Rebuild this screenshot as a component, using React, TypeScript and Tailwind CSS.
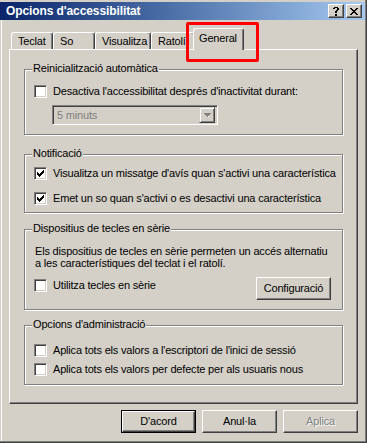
import React from "react";

const FONT = { fontFamily: '"Liberation Sans", Arial, sans-serif' };

function CheckMark() {
  const px: [number, number][] = [
    [6, 0], [5, 1], [6, 1], [0, 2], [4, 2], [5, 2], [6, 2],
    [0, 3], [1, 3], [3, 3], [4, 3], [5, 3],
    [0, 4], [1, 4], [2, 4], [3, 4], [4, 4],
    [1, 5], [2, 5], [3, 5], [2, 6],
  ];
  return (
    <svg width="7" height="7" viewBox="0 0 7 7" shapeRendering="crispEdges" className="block">
      {px.map(([x, y], i) => (
        <rect key={i} x={x} y={y} width="1" height="1" fill="#000" />
      ))}
    </svg>
  );
}

function Check({ checked, label }: { checked?: boolean; label: string }) {
  return (
    <div className="flex h-[13px] items-center">
      <div className="box-border flex h-[13px] w-[13px] shrink-0 items-center justify-center border border-t-[#808080] border-l-[#808080] border-r-white border-b-white bg-white shadow-[inset_1px_1px_0_#404040,inset_-1px_-1px_0_#d4d0c8]">
        {checked && <CheckMark />}
      </div>
      <span className="ml-[6px] whitespace-nowrap text-[11px] leading-[13px] tracking-[-0.18px] text-black">{label}</span>
    </div>
  );
}

function Group({ label, className, children }: { label: string; className: string; children?: React.ReactNode }) {
  return (
    <div
      className={`relative box-border w-[319px] border border-[#808080] shadow-[inset_1px_1px_0_#fff,1px_1px_0_#fff] ${className}`}
    >
      <span className="absolute left-[7px] top-[-8px] bg-[#d4d0c8] px-[1px] text-[11px] leading-[13px] tracking-[-0.18px] text-black whitespace-nowrap">
        {label}
      </span>
      {children}
    </div>
  );
}

function Button({ label, def, disabled, className = "" }: { label: string; def?: boolean; disabled?: boolean; className?: string }) {
  const inner = (
    <div className="box-border flex h-full w-full items-center justify-center border border-t-white border-l-white border-r-[#404040] border-b-[#404040] shadow-[inset_-1px_-1px_0_#808080]">
      <span
        className={`text-[11px] leading-[13px] tracking-[-0.18px] ${disabled ? "text-[#808080] [text-shadow:1px_1px_0_#fff]" : "text-black"}`}
      >
        {label}
      </span>
    </div>
  );
  return (
    <div className={`box-border h-[23px] w-[75px] shrink-0 ${def ? "border border-black" : ""} ${className}`}>{inner}</div>
  );
}

function Tab({ label, w, selected }: { label: string; w: string; selected?: boolean }) {
  if (selected) {
    return (
      <div
        className={`relative z-10 -mb-[1px] -ml-[2px] box-border h-[22px] ${w} whitespace-nowrap rounded-t-[3px] border-l border-t border-r border-l-white border-t-white border-r-[#404040] bg-[#d4d0c8] pl-[5px] pt-[3px] text-[11px] leading-[13px] tracking-[-0.18px] text-black shadow-[inset_-1px_0_0_#808080]`}
      >
        {label}
      </div>
    );
  }
  return (
    <div
      className={`box-border h-[17px] ${w} overflow-hidden whitespace-nowrap rounded-t-[3px] border-l border-t border-r border-l-white border-t-white border-r-[#404040] pl-[6px] pt-[2px] text-[11px] leading-[13px] tracking-[-0.18px] text-black shadow-[inset_-1px_0_0_#808080]`}
    >
      {label}
    </div>
  );
}

function XGlyph() {
  const rows = ["XX....XX", ".XX..XX.", "..XXXX..", "...XX...", "..XXXX..", ".XX..XX.", "XX....XX"];
  return (
    <svg width="8" height="7" viewBox="0 0 8 7" shapeRendering="crispEdges" className="block">
      {rows.flatMap((r, y) =>
        r.split("").map((c, x) => (c === "X" ? <rect key={`${x}-${y}`} x={x} y={y} width="1" height="1" fill="#000" /> : null))
      )}
    </svg>
  );
}

function QGlyph() {
  const rows = [".XXXX.", "XX..XX", "....XX", "...XX.", "..XX..", "..XX..", "......", "..XX..", "..XX.."];
  return (
    <svg width="6" height="9" viewBox="0 0 6 9" shapeRendering="crispEdges" className="block">
      {rows.flatMap((r, y) =>
        r.split("").map((c, x) => (c === "X" ? <rect key={`${x}-${y}`} x={x} y={y} width="1" height="1" fill="#000" /> : null))
      )}
    </svg>
  );
}

function TitleBtn({ children }: { children: React.ReactNode }) {
  return (
    <div className="box-border flex h-[14px] w-[16px] items-center justify-center border border-t-white border-l-white border-r-[#404040] border-b-[#404040] bg-[#d4d0c8] shadow-[inset_-1px_-1px_0_#808080]">
      {children}
    </div>
  );
}

export default function App() {
  return (
    <div
      style={FONT}
      className="relative box-border flex h-[443px] w-[367px] flex-col overflow-hidden border-r border-b border-[#404040] bg-[#d4d0c8] pt-[2px] text-[11px] leading-[13px] shadow-[inset_-1px_-1px_0_#808080]"
    >
      {/* left frame highlight */}
      <div className="absolute bottom-[1px] left-[1px] top-[20px] w-[1px] bg-white" />

      {/* title bar */}
      <div className="mr-[1px] flex h-[18px] shrink-0 items-center bg-gradient-to-r from-[#0a246a] to-[#a6caf0] pl-[6px] pr-[3px]">
        <span className="text-[12px] font-bold leading-[14px] tracking-[-0.1px] text-white">Opcions d'accessibilitat</span>
        <div className="ml-auto flex gap-[2px]">
          <TitleBtn>
            <QGlyph />
          </TitleBtn>
          <TitleBtn>
            <XGlyph />
          </TitleBtn>
        </div>
      </div>

      {/* tabs */}
      <div className="mt-[8px] flex h-[21px] shrink-0 items-end pl-[11px]">
        <Tab label="Teclat" w="w-[42px]" />
        <Tab label="So" w="w-[42px]" />
        <Tab label="Visualitza" w="w-[56px]" />
        <Tab label="Ratolí" w="w-[44px]" />
        <Tab label="General" w="w-[51px]" selected />
      </div>

      {/* panel */}
      <div className="ml-[9px] box-border h-[355px] w-[349px] shrink-0 border border-t-white border-l-white border-r-[#404040] border-b-[#404040] pl-[14px] pt-[19px] shadow-[inset_-1px_-1px_0_#808080]">
        <Group label="Reinicialització automàtica" className="h-[66px] pl-[9px] pt-[15px]">
          <Check label="Desactiva l'accessibilitat després d'inactivitat durant:" />
          <div className="ml-[18px] mt-[7px] box-border flex h-[20px] w-[166px] items-center border border-t-[#808080] border-l-[#808080] border-r-white border-b-white shadow-[inset_1px_1px_0_#404040,inset_-1px_-1px_0_#d4d0c8]">
            <span className="ml-[4px] text-[11px] leading-[13px] tracking-[-0.18px] text-[#808080]">5 minuts</span>
            <div className="ml-auto mr-[2px] box-border flex h-[16px] w-[16px] items-center justify-center border border-t-[#d4d0c8] border-l-[#d4d0c8] border-r-[#404040] border-b-[#404040] shadow-[inset_1px_1px_0_#fff,inset_-1px_-1px_0_#808080]">
              <svg width="7" height="4" viewBox="0 0 7 4" shapeRendering="crispEdges" className="block">
                <rect x="0" y="0" width="7" height="1" fill="#808080" />
                <rect x="1" y="1" width="5" height="1" fill="#808080" />
                <rect x="2" y="2" width="3" height="1" fill="#808080" />
                <rect x="3" y="3" width="1" height="1" fill="#808080" />
                <rect x="4" y="3" width="1" height="1" fill="#fff" />
              </svg>
            </div>
          </div>
        </Group>

        <Group label="Notificació" className="mt-[19px] h-[59px] pl-[9px] pt-[12px]">
          <Check checked label="Visualitza un missatge d'avís quan s'activi una característica" />
          <div className="mt-[12px]">
            <Check checked label="Emet un so quan s'activi o es desactivi una característica" />
          </div>
        </Group>

        <Group label="Dispositius de tecles en sèrie" className="mt-[16px] h-[81px] pl-[10px] pt-[15px]">
          <p className="text-[11px] leading-[12px] tracking-[-0.18px] text-black">
            Els dispositius de tecles en sèrie permeten un accés alternatiu
            <br />a les característiques del teclat i el ratolí.
          </p>
          <div className="mt-[8px] flex items-start pr-[11px]">
            <div className="-ml-[1px] mt-[2px]">
              <Check label="Utilitza tecles en sèrie" />
            </div>
            <Button label="Configuració" className="ml-auto" />
          </div>
        </Group>

        <Group label="Opcions d'administració" className="mt-[15px] h-[60px] pl-[9px] pt-[18px]">
          <Check label="Aplica tots els valors a l'escriptori de l'inici de sessió" />
          <div className="mt-[6px]">
            <Check label="Aplica tots els valors per defecte per als usuaris nous" />
          </div>
        </Group>
      </div>

      {/* buttons */}
      <div className="ml-[121px] mt-[6px] flex gap-[6px]">
        <Button label="D'acord" def />
        <Button label="Anul·la" />
        <Button label="Aplica" disabled />
      </div>

      {/* red annotation box */}
      <div className="pointer-events-none absolute left-[186px] top-[22px] z-20 box-border h-[40px] w-[73px] rounded-[2px] border-[3px] border-[#ff0000]" />
    </div>
  );
}
